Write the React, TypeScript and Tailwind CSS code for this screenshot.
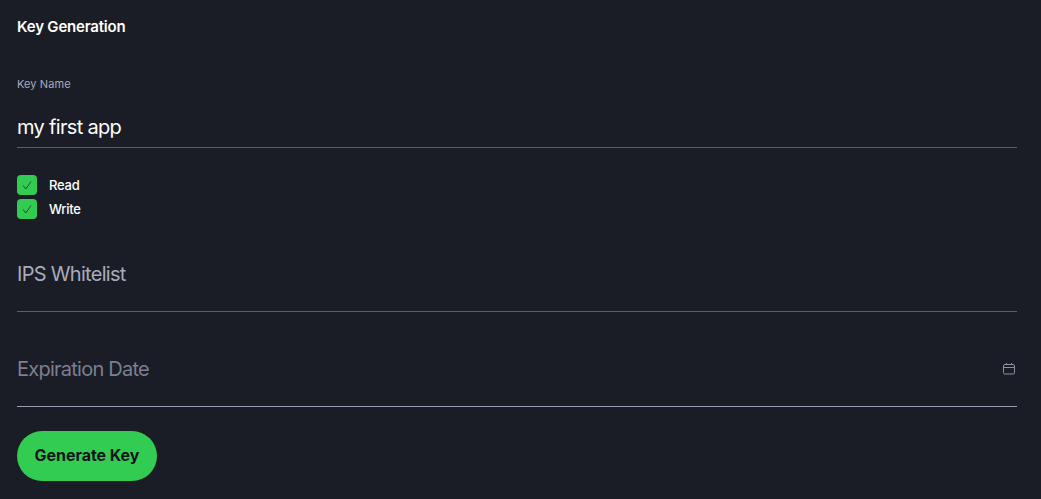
function Box({ label }: { label: string }) {
  return (
    <label className="flex h-6 items-center gap-3">
      <span className="flex h-5 w-5 items-center justify-center rounded-[4px] bg-[#33cc52]">
        <svg className="h-5 w-5" viewBox="0 0 20 20" fill="none" stroke="#1f4f30" strokeWidth="1">
          <path d="M6 10.5 L8.8 14 L14 6.5" />
        </svg>
      </span>
      <span className="pt-0.5 text-[13px] font-medium tracking-[-0.25px] text-white">{label}</span>
    </label>
  );
}

export default function App() {
  return (
    <div className="h-[499px] w-[1041px] overflow-hidden bg-[#1a1d26] pr-6 pl-[17px] font-['Inter',sans-serif]">
      <h2 className="pt-[17px] text-[15px] leading-5 font-semibold tracking-[-0.2px] text-white">Key Generation</h2>
      <div className="mt-[39px] text-[11px] leading-4 tracking-[0.1px] text-[#a9abbb]">Key Name</div>
      <div className="flex h-14 items-center border-b border-[#5c5e68] pt-[15px] text-xl font-normal tracking-[-0.68px] text-white">my first app</div>
      <div className="mt-[25px] flex flex-col">
        <Box label="Read" />
        <Box label="Write" />
      </div>
      <div className="mt-6 flex h-[67px] items-center border-b border-[#5c5e68] pb-2 text-xl tracking-[-0.7px] text-[#a9abbb]">IPS Whitelist</div>
      <div className="mt-7 flex h-[67px] items-center justify-between border-b border-[#9c9db0] pb-2 text-xl tracking-[-0.75px] text-[#7d7f90]">
        <span>Expiration Date</span>
        <svg className="mr-px h-3.5 w-3.5 text-[#8f90a0]" viewBox="0 0 14 14" fill="none" stroke="currentColor" strokeWidth="1">
          <rect x="1.5" y="2.5" width="11" height="9.5" rx="1.5" />
          <path d="M1.5 5.5h11M4.5 1v2M9.5 1v2" />
        </svg>
      </div>
      <button className="mt-6 h-[50px] w-[140px] rounded-full bg-[#33cc52] pb-0.5 text-base font-bold tracking-[-0.05px] text-[#10141a]">Generate Key</button>
    </div>
  );
}
